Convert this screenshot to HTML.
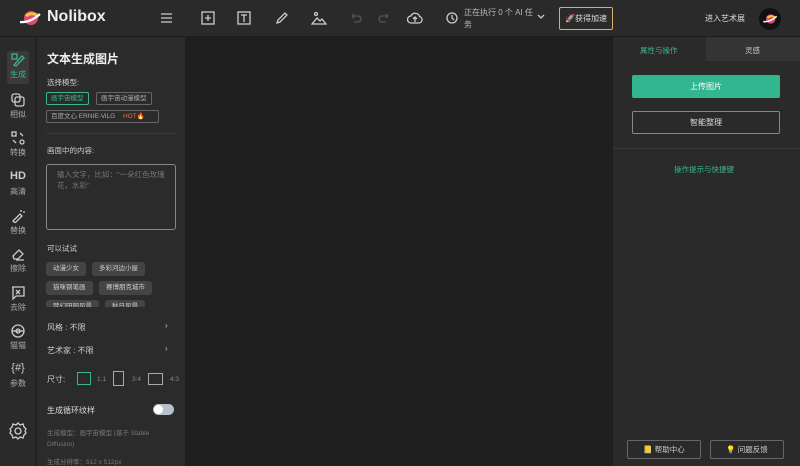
<!DOCTYPE html>
<html><head><meta charset="utf-8"><style>
*{box-sizing:border-box;margin:0;padding:0}
body{width:800px;height:466px;overflow:hidden;background:#1f1f1f;font-family:"Liberation Sans","Noto Sans CJK SC",sans-serif;color:#ddd;position:relative}
.abs{position:absolute}
.hdr{left:0;top:0;width:800px;height:37px;background:#2a2a2a;border-bottom:1px solid #1c1c1c}
.side{left:0;top:37px;width:36px;height:429px;background:#2a2a2a;border-right:1px solid #222}
.panel{left:37px;top:37px;width:148px;height:429px;background:#2b2b2b}
.right{left:613px;top:37px;width:187px;height:429px;background:#2a2a2a}
.ic{position:absolute;left:0;width:36px;text-align:center;font-size:8px;color:#aaa}
.ic svg{display:block;margin:0 auto 2px}
.tag{position:absolute;height:13px;border:1px solid #666;border-radius:2px;font-size:6.5px;color:#aaa;line-height:11px;padding:0 4px}
.chip{position:absolute;height:14px;background:#444;border-radius:3px;font-size:6.5px;color:#ccc;line-height:14px;padding:0 7px}
.t{position:absolute;font-size:8px;color:#ccc;white-space:nowrap}
svg{stroke:#ccc;fill:none;stroke-width:1.3}
</style></head><body>
<div class="abs hdr">
 <svg class="abs" style="left:18px;top:9px" width="24" height="18" viewBox="0 0 24 18"><circle cx="13" cy="9" r="7" fill="#e04a6a" stroke="none"/><path d="M8 7 Q13 3 19 6" stroke="#f5c040" stroke-width="3"/><path d="M2 13 Q12 14 22 5" stroke="#fff" stroke-width="2.2"/></svg>
 <div class="abs" style="left:47px;top:8px;font-size:16px;font-weight:bold;color:#eee">Nolibox</div>
 <svg class="abs" style="left:160px;top:12px" width="13" height="12"><path d="M1 2H12M1 6H12M1 10H12"/></svg>
 <svg class="abs" style="left:201px;top:11px" width="14" height="14"><rect x="1" y="1" width="12" height="12"/><path d="M7 4V10M4 7H10"/></svg>
 <svg class="abs" style="left:237px;top:11px" width="14" height="14"><rect x="1" y="1" width="12" height="12"/><path d="M4 4H10M7 4V11"/></svg>
 <svg class="abs" style="left:275px;top:11px" width="14" height="14"><path d="M2 12L3 9L10 2L12 4L5 11Z"/></svg>
 <svg class="abs" style="left:311px;top:11px" width="16" height="14"><circle cx="5" cy="3" r="1.5"/><path d="M1 13L6 7L9 10L11 8L15 13Z"/></svg>
 <svg class="abs" style="left:349px;top:12px;stroke:#555" width="13" height="12"><path d="M3 4H9A3 3 0 0 1 9 10H5M3 4L5 2M3 4L5 6"/></svg>
 <svg class="abs" style="left:378px;top:12px;stroke:#555" width="13" height="12"><path d="M10 4H4A3 3 0 0 0 4 10H8M10 4L8 2M10 4L8 6"/></svg>
 <svg class="abs" style="left:407px;top:11px" width="16" height="14"><path d="M4 12A3.5 3.5 0 0 1 4 5A4.5 4.5 0 0 1 12.5 5.5A3.3 3.3 0 0 1 12 12ZM8 11V6M6 8L8 6L10 8"/></svg>
 <svg class="abs" style="left:446px;top:12px" width="12" height="12"><circle cx="6" cy="6" r="5"/><path d="M6 3V6L8 8"/></svg>
 <div class="t" style="left:464px;top:7px;font-size:8px;line-height:12px;color:#bbb;white-space:normal;width:75px">正在执行 0 个 AI 任<br>务</div>
 <svg class="abs" style="left:537px;top:14px" width="8" height="6"><path d="M1 1L4 4L7 1"/></svg>
 <div class="abs" style="left:559px;top:7px;width:54px;height:23px;border:1px solid #d6b06a;border-radius:2px;font-size:8px;color:#ddd;line-height:21px;text-align:center">🚀获得加速</div>
 <div class="t" style="left:705px;top:13px;color:#ddd">进入艺术展</div>
 <div class="abs" style="left:759px;top:8px;width:22px;height:22px;border-radius:50%;background:#111"><svg class="abs" style="left:3px;top:4px" width="16" height="14" viewBox="0 0 24 18"><circle cx="13" cy="9" r="7" fill="#e04a6a" stroke="none"/><path d="M8 7 Q13 3 19 6" stroke="#f5c040" stroke-width="3"/><path d="M2 13 Q12 14 22 5" stroke="#fff" stroke-width="2.2"/></svg></div>
</div>
<div class="abs side">
 <div class="abs" style="left:7px;top:14px;width:22px;height:33px;background:#3a3a3a;border-radius:3px"></div>
 <div class="ic" style="top:16px;color:#3bb58e"><svg width="14" height="14" style="stroke:#3bb58e"><rect x="1" y="1" width="5" height="5"/><path d="M3 12L11 3L13 5L5 13Z"/></svg>生成</div>
 <div class="ic" style="top:56px"><svg width="14" height="14"><rect x="1" y="1" width="8" height="8" rx="2"/><rect x="4" y="4" width="9" height="9" rx="2"/></svg>相似</div>
 <div class="ic" style="top:94px"><svg width="14" height="14"><rect x="1" y="1" width="4" height="4"/><circle cx="11" cy="11" r="2"/><path d="M9 2L12 5M2 9L5 12"/></svg>转换</div>
 <div class="ic" style="top:133px;color:#aaa"><div style="font-weight:bold;font-size:11px;color:#ccc;height:16px">HD</div>高清</div>
 <div class="ic" style="top:172px"><svg width="14" height="14"><path d="M2 12L9 5L11 7L4 14ZM10 1V3M12 3H14"/></svg>替换</div>
 <div class="ic" style="top:210px"><svg width="14" height="14"><path d="M2 9L8 3L12 7L7 12H3ZM5 13H13"/></svg>擦除</div>
 <div class="ic" style="top:249px"><svg width="14" height="14"><path d="M1 1H13V10H5L2 13V1M5 4L9 8M9 4L5 8"/></svg>去除</div>
 <div class="ic" style="top:287px"><svg width="14" height="14"><circle cx="7" cy="7" r="6"/><path d="M1 7H13"/><circle cx="7" cy="7" r="2"/></svg>猫猫</div>
 <div class="ic" style="top:325px"><div style="font-size:11px;color:#ccc;height:16px">{#}</div>参数</div>
 <svg class="abs" style="left:8px;top:384px" width="20" height="20"><circle cx="10" cy="10" r="3"/><path d="M10 2L12 4L15 3L16 6L18 8L17 10L18 12L16 14L15 17L12 16L10 18L8 16L5 17L4 14L2 12L3 10L2 8L4 6L5 3L8 4Z"/></svg>
</div>
<div class="abs panel">
 <div class="t" style="left:10px;top:13px;font-size:12px;color:#eee;font-weight:bold">文本生成图片</div>
 <div class="t" style="left:10px;top:40px;font-size:7.5px">选择模型:</div>
 <div class="tag" style="left:9px;top:55px;border-color:#3bb58e;color:#3bb58e">画宇宙模型</div>
 <div class="tag" style="left:59px;top:55px">画宇宙动漫模型</div>
 <div class="tag" style="left:9px;top:73px;width:113px">百度文心 ERNIE-ViLG <span style="color:#f07030;margin-left:6px">HOT🔥</span></div>
 <div class="abs" style="left:9px;top:96px;width:130px;height:1px;background:#3a3a3a"></div>
 <div class="t" style="left:10px;top:108px;font-size:7.5px">画面中的内容:</div>
 <div class="abs" style="left:9px;top:127px;width:130px;height:66px;border:1px solid #888;border-radius:3px;font-size:7.5px;color:#777;padding:4px 10px;line-height:11px">输入文字，比如："一朵红色玫瑰花，水彩"</div>
 <div class="t" style="left:10px;top:206px;font-size:7.5px">可以试试</div>
 <div class="chip" style="left:9px;top:225px">动漫少女</div>
 <div class="chip" style="left:55px;top:225px">多彩河边小屋</div>
 <div class="chip" style="left:9px;top:244px">猫咪钢笔画</div>
 <div class="chip" style="left:62px;top:244px">赛博朋克城市</div>
 <div class="abs" style="left:9px;top:263px;width:130px;height:7px;overflow:hidden"><div class="chip" style="left:0;top:0">梦幻田园风景</div><div class="chip" style="left:59px;top:0">秋日风景</div></div>
 <div class="t" style="left:10px;top:285px;font-size:8px">风格 : 不限</div><div class="t" style="left:128px;top:284px">›</div>
 <div class="t" style="left:10px;top:308px;font-size:8px">艺术家 : 不限</div><div class="t" style="left:128px;top:307px">›</div>
 <div class="t" style="left:10px;top:337px;font-size:8px">尺寸:</div>
 <div class="abs" style="left:40px;top:335px;width:14px;height:13px;border:1px solid #3bb58e"></div>
 <div class="t" style="left:60px;top:339px;font-size:6.5px;color:#888">1:1</div>
 <div class="abs" style="left:76px;top:334px;width:11px;height:15px;border:1px solid #aaa"></div>
 <div class="t" style="left:95px;top:339px;font-size:6.5px;color:#888">3:4</div>
 <div class="abs" style="left:111px;top:336px;width:15px;height:12px;border:1px solid #aaa"></div>
 <div class="t" style="left:133px;top:339px;font-size:6.5px;color:#888">4:3</div>
 <div class="t" style="left:10px;top:368px;font-size:8px;color:#ddd">生成循环纹样</div>
 <div class="abs" style="left:116px;top:367px;width:21px;height:11px;border-radius:6px;background:#b8c0cc"><div class="abs" style="left:1px;top:1px;width:9px;height:9px;border-radius:50%;background:#fff"></div></div>
 <div class="t" style="left:10px;top:391px;font-size:6.5px;color:#777;line-height:11px">生成模型：画宇宙模型 (基于 Stable<br>Diffusion)</div>
 <div class="t" style="left:10px;top:419px;font-size:6.5px;color:#777">生成分辨率：512 x 512px</div>
</div>
<div class="abs right">
 <div class="abs" style="left:93px;top:0;width:94px;height:24px;background:#343434"></div>
 <div class="t" style="left:27px;top:8px;font-size:7.5px;color:#3bb58e">属性与操作</div>
 <div class="t" style="left:132px;top:8px;font-size:7.5px">灵感</div>
 <div class="abs" style="left:19px;top:38px;width:148px;height:23px;background:#32b690;border-radius:2px;font-size:8px;color:#fff;text-align:center;line-height:23px">上传图片</div>
 <div class="abs" style="left:19px;top:74px;width:148px;height:23px;border:1px solid #888;border-radius:2px;font-size:8px;color:#ddd;text-align:center;line-height:21px">智能整理</div>
 <div class="abs" style="left:0;top:111px;width:187px;height:1px;background:#3a3a3a"></div>
 <div class="t" style="left:61px;top:127px;font-size:7.5px;color:#3bb58e">操作提示与快捷键</div>
 <div class="abs" style="left:14px;top:403px;width:74px;height:19px;border:1px solid #666;border-radius:2px;font-size:7.5px;color:#ccc;text-align:center;line-height:17px">📒 帮助中心</div>
 <div class="abs" style="left:97px;top:403px;width:74px;height:19px;border:1px solid #666;border-radius:2px;font-size:7.5px;color:#ccc;text-align:center;line-height:17px">💡 问题反馈</div>
</div>
</body></html>
